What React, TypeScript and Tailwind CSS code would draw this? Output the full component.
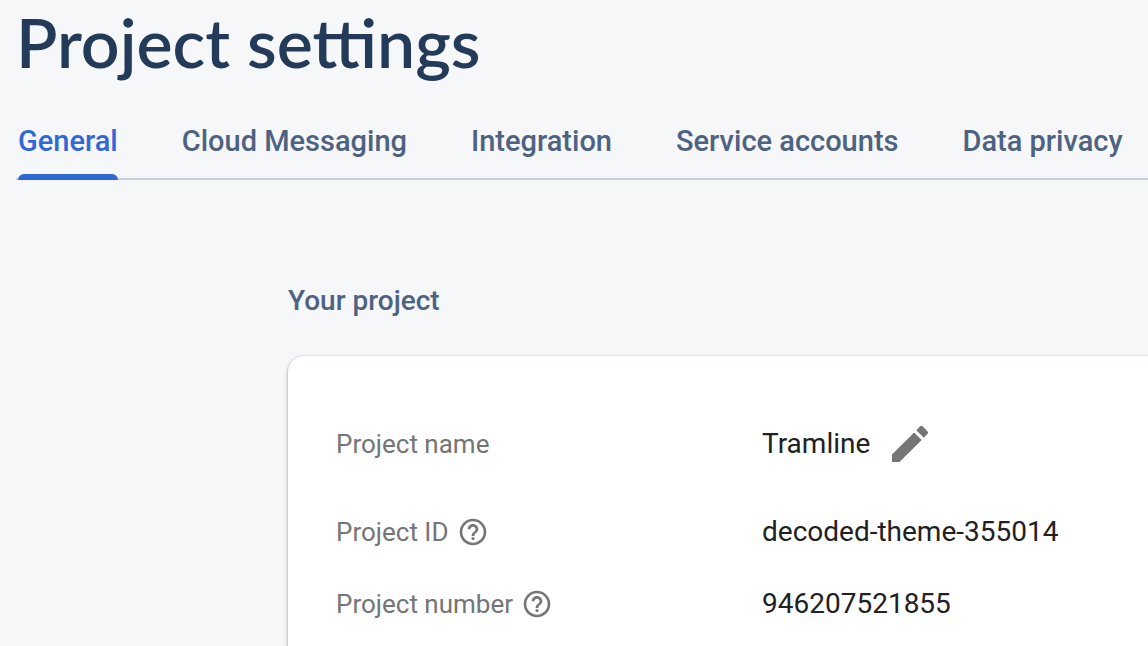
import type { ReactNode } from "react";
import { MdEdit, MdHelpOutline } from "react-icons/md";

const tabs = ["General", "Cloud Messaging", "Integration", "Service accounts", "Data privacy"];

function Row({ label, help, children }: { label: string; help?: boolean; children: ReactNode }) {
  return (
    <div className="grid grid-cols-[426px_1fr] items-center">
      <dt className="flex items-center gap-2 text-[26px] leading-8 text-[#757575]">
        {label}
        {help && (
          <button type="button" aria-label={`About ${label}`} className="shrink-0">
            <MdHelpOutline size={32} />
          </button>
        )}
      </dt>
      <dd className="text-[28px] leading-10 text-[#212121]">{children}</dd>
    </div>
  );
}

export default function App() {
  return (
    <div className="min-h-screen overflow-x-hidden bg-[#f6f7f9] font-['Roboto',sans-serif]">
      <header className="pl-4">
        <h1 className="pt-0.5 pb-1.5 font-['Lato',sans-serif] text-[68px] leading-20 font-semibold text-[#243a59]">
          Project settings
        </h1>
        <nav aria-label="Project settings" className="mt-4 border-b-2 border-[#c4cfdf] pl-0.5">
          <ul className="-mb-0.5 flex gap-16 whitespace-nowrap">
            {tabs.map((tab, i) => (
              <li key={tab}>
                <a
                  href="#"
                  aria-current={i === 0 ? "page" : undefined}
                  className={
                    i === 0
                      ? "flex flex-col text-[29px] leading-[74px] font-medium text-[#3367d6]"
                      : "flex flex-col text-[29px] leading-[74px] font-medium text-[#4e6282]"
                  }
                >
                  {tab}
                  {i === 0 && <span className="-mt-1 h-1.5 rounded-t-md bg-[#3067d3]" />}
                </a>
              </li>
            ))}
          </ul>
        </nav>
      </header>
      <main className="pt-25 pl-72">
        <h2 className="text-[28px] leading-[42px] font-medium text-[#4e6282]">Your project</h2>
        <section className="mt-[34px] rounded-l-2xl bg-white pt-13 pb-12 pl-12 shadow-[0_2px_4px_rgba(0,0,0,0.3),0_0_2px_rgba(0,0,0,0.16)]">
          <dl className="flex flex-col gap-8">
            <Row label="Project name">
              <div className="flex items-center gap-4 py-3">
                Tramline
                <button type="button" aria-label="Edit project name" className="text-[#757575]">
                  <MdEdit size={48} />
                </button>
              </div>
            </Row>
            <Row label="Project ID" help>
              decoded-theme-355014
            </Row>
            <Row label="Project number" help>
              946207521855
            </Row>
          </dl>
        </section>
      </main>
    </div>
  );
}
